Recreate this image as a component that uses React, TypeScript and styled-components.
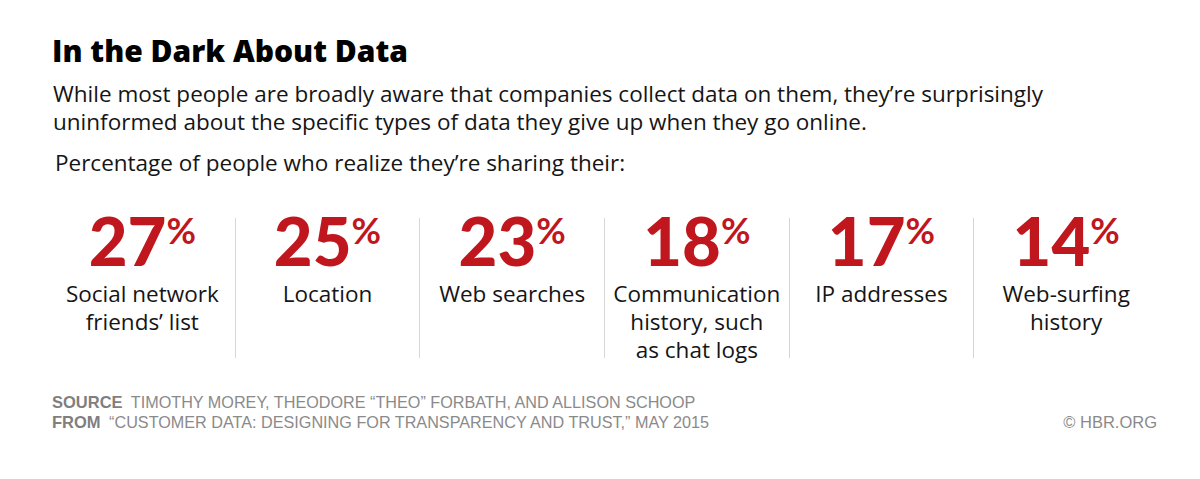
import React from "react";
import styled, { createGlobalStyle } from "styled-components";

interface Stat {
  value: string;
  label: string[];
}

const stats: Stat[] = [
  { value: "27", label: ["Social network", "friends’ list"] },
  { value: "25", label: ["Location"] },
  { value: "23", label: ["Web searches"] },
  { value: "18", label: ["Communication", "history, such", "as chat logs"] },
  { value: "17", label: ["IP addresses"] },
  { value: "14", label: ["Web-surfing", "history"] },
];

const App: React.FC = () => {
  return (
    <Page>
      <GlobalStyle />
      <Title>In the Dark About Data</Title>
      <Intro>
        While most people are broadly aware that companies collect data on them, they’re surprisingly
        <br />
        uninformed about the specific types of data they give up when they go online.
      </Intro>
      <Lead>Percentage of people who realize they’re sharing their:</Lead>
      <Stats>
        {stats.map((stat, index) => (
          <Column key={stat.value} $first={index === 0}>
            <Value>
              {stat.value}
              <Percent>%</Percent>
            </Value>
            <Label>
              {stat.label.map((line) => (
                <div key={line}>{line}</div>
              ))}
            </Label>
          </Column>
        ))}
      </Stats>
      <Footer>
        <Credits>
          <div>
            <Key>SOURCE</Key> TIMOTHY MOREY, THEODORE “THEO” FORBATH, AND ALLISON SCHOOP
          </div>
          <div>
            <Key>FROM</Key> “CUSTOMER DATA: DESIGNING FOR TRANSPARENCY AND TRUST,” MAY 2015
          </div>
        </Credits>
        <Copyright>© HBR.ORG</Copyright>
      </Footer>
    </Page>
  );
};

const GlobalStyle = createGlobalStyle`
  html, body {
    margin: 0;
    padding: 0;
    background: #fff;
  }
`;

const Page = styled.div`
  width: 1200px;
  height: 479px;
  box-sizing: border-box;
  padding: 33px 43px 0 52px;
  font-family: "Open Sans", "Liberation Sans", sans-serif;
  color: #151515;
  overflow: hidden;
`;

const Title = styled.h1`
  margin: 0;
  font-size: 30px;
  line-height: 36px;
  font-weight: 800;
  color: #000;
`;

const Intro = styled.p`
  margin: 11px 0 0 1px;
  font-size: 22.5px;
  line-height: 28px;
`;

const Lead = styled.p`
  margin: 13px 0 0 3px;
  font-size: 22.5px;
  line-height: 28px;
`;

const Stats = styled.div`
  display: grid;
  grid-template-columns: repeat(6, 1fr);
  margin: 41px 0 0 -2px;
  width: 1108px;
`;

const Column = styled.div<{ $first: boolean }>`
  display: flex;
  flex-direction: column;
  align-items: center;
  height: 140px;
  border-left: ${({ $first }) => ($first ? "none" : "1px solid #d6d6d6")};
`;

const Value = styled.div`
  display: flex;
  align-items: flex-start;
  font-family: "Lato", "DejaVu Sans", sans-serif;
  font-weight: 900;
  font-size: 67px;
  line-height: 44px;
  color: #c0171f;
`;

const Percent = styled.span`
  font-size: 36px;
  line-height: 36px;
  font-weight: 700;
  margin: -6px 0 0 0;
`;

const Label = styled.div`
  margin-top: 18px;
  font-size: 22.5px;
  line-height: 28px;
  text-align: center;
`;

const Footer = styled.div`
  display: flex;
  justify-content: space-between;
  align-items: flex-end;
  margin-top: 34px;
  color: #8a8a8a;
  font-family: "Liberation Sans Narrow", "Liberation Sans", sans-serif;
  font-size: 16.2px;
  line-height: 20px;
`;

const Credits = styled.div``;

const Key = styled.span`
  font-family: "Liberation Sans", sans-serif;
  font-weight: 700;
  font-size: 16.5px;
  color: #7f7f7f;
  margin-right: 4px;
`;

const Copyright = styled.div`
  font-family: "Liberation Sans", sans-serif;
  font-size: 16.5px;
`;

export default App;
